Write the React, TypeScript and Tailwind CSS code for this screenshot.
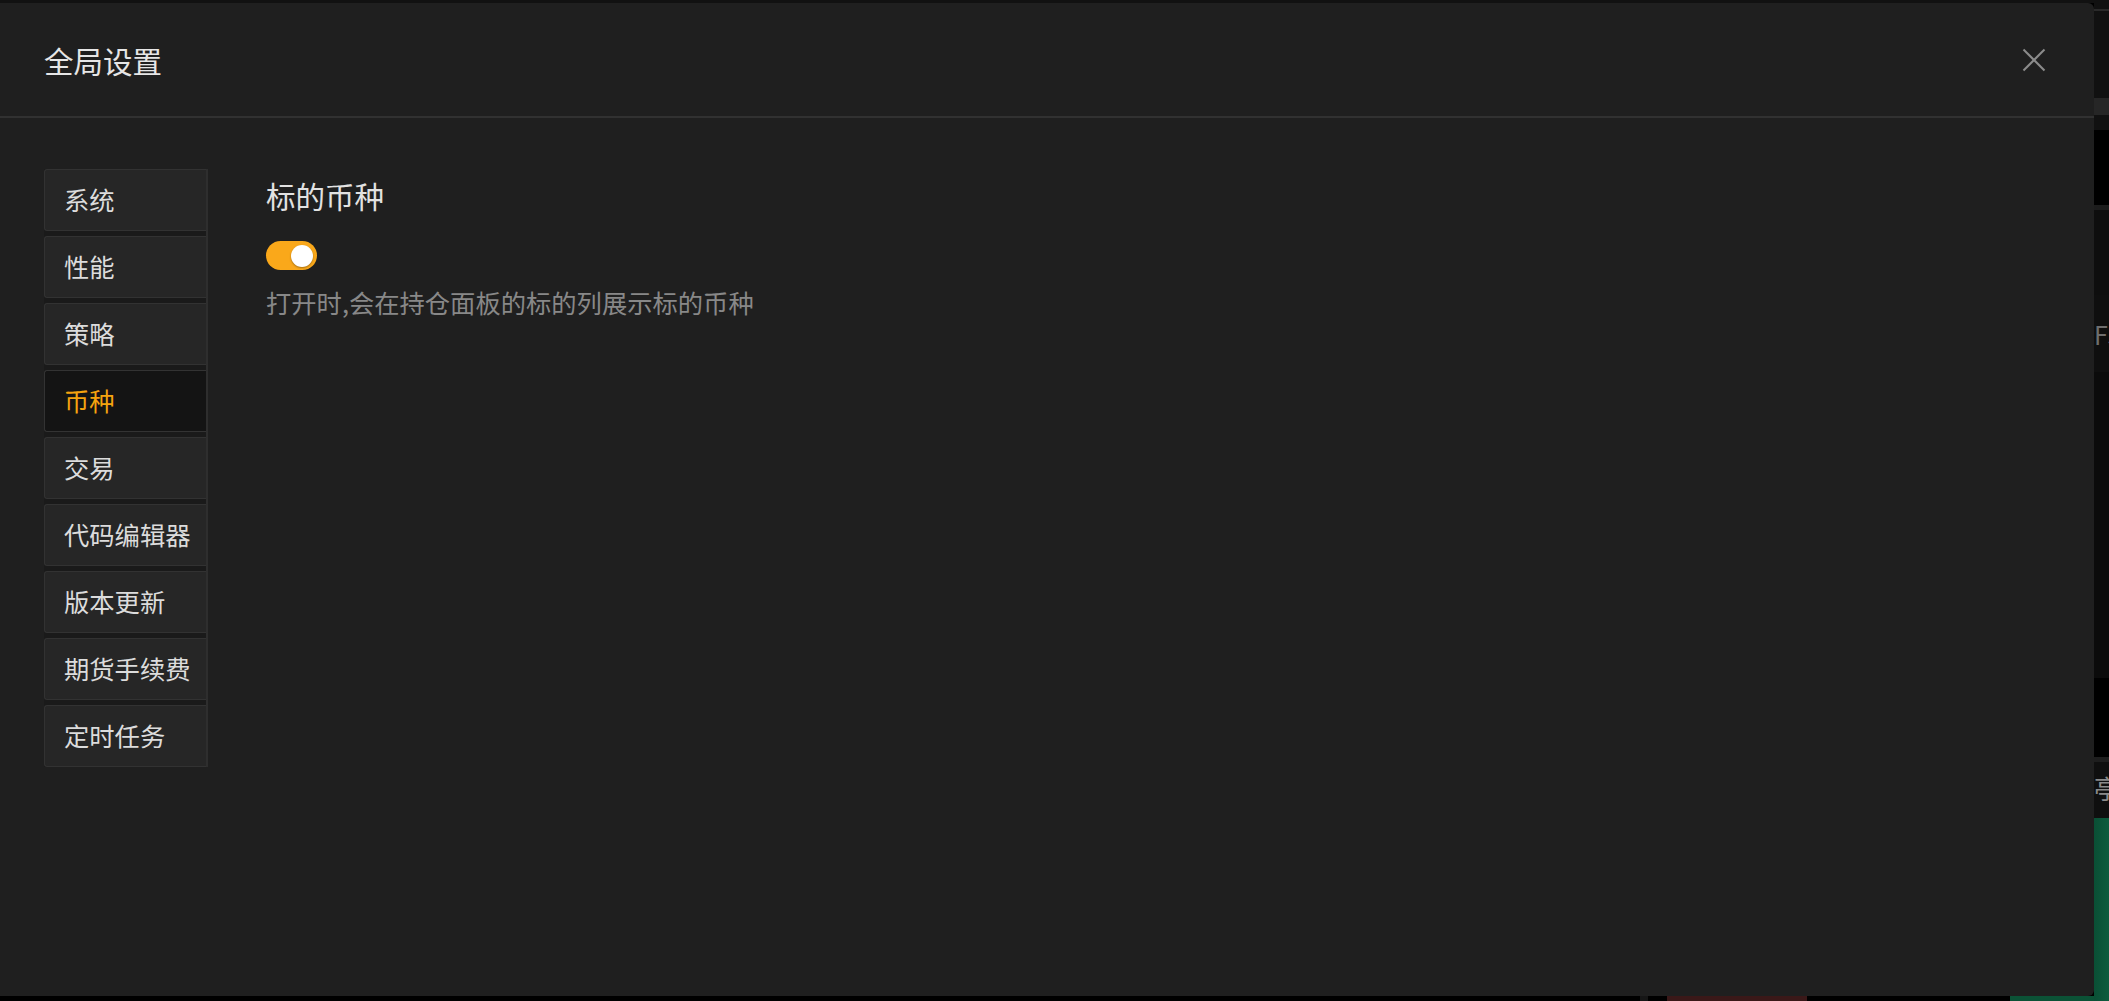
import React from "react";

const menu = ["系统", "性能", "策略", "币种", "交易", "代码编辑器", "版本更新", "期货手续费", "定时任务"];

export default function App() {
  return (
    <div className="relative w-[2109px] h-[1001px] overflow-hidden flex bg-black font-['Noto_Sans_CJK_SC','Noto_Sans',sans-serif]">
      {/* background app */}
      <div className="flex-1 flex flex-col">
        <div className="h-[3px] bg-[#111111]" />
        <div className="flex-1 bg-black" />
        <div className="h-[5px] flex">
          <div className="w-[1640px] bg-black" />
          <div className="w-[8px] bg-[#161616]" />
          <div className="w-[19px] bg-black" />
          <div className="w-[140px] bg-[#3a1818]" />
          <div className="w-[203px] bg-black" />
          <div className="w-[84px] bg-[#0b5236]" />
        </div>
      </div>
      <div className="w-[15px] flex flex-col overflow-hidden whitespace-nowrap">
        <div className="h-[9px] bg-[#111111]" />
        <div className="h-[2px] bg-[#2a2a2a]" />
        <div className="h-[87px] bg-[#111111]" />
        <div className="h-[17px] bg-[#262626]" />
        <div className="h-[15px] bg-[#111111]" />
        <div className="h-[75px] bg-black" />
        <div className="h-[5px] bg-[#1c1c1c]" />
        <div className="h-[85px] bg-[#0e0e0e]" />
        <div className="h-[77px] bg-[#0f0f0f] pt-[27px] text-[25px] leading-[25px] text-[#6e6e6e]">F5</div>
        <div className="h-[306px] bg-[#0b0b0b]" />
        <div className="h-[79px] bg-black" />
        <div className="h-[5px] bg-[#1e1e1e]" />
        <div className="h-[56px] bg-[#0f0f0f] pt-[12px] text-[26px] leading-[28px] text-[#8a8a8a]">亭</div>
        <div className="h-[183px] bg-gradient-to-r from-[#0a4f35] to-[#0d5c3e]" />
      </div>

      {/* modal */}
      <div className="absolute left-0 top-[3px] w-[2094px] h-[993px] bg-[#1f1f1f] rounded-r-[6px] flex flex-col">
        <div className="h-[115px] shrink-0 flex items-center justify-between pl-[44px] pr-[48px] border-b-2 border-[#313131]">
          <div className="text-[29.5px] leading-[40px] text-[#e6e6e6]">全局设置</div>
          <svg width="24" height="24" viewBox="0 0 24 24" className="text-[#8c8c8c]">
            <line x1="1.5" y1="1.5" x2="22.5" y2="22.5" stroke="currentColor" strokeWidth="2" />
            <line x1="22.5" y1="1.5" x2="1.5" y2="22.5" stroke="currentColor" strokeWidth="2" />
          </svg>
        </div>
        <div className="flex pl-[44px] pt-[51px]">
          <div className="w-[164px] flex flex-col gap-[5px] bg-[#1a1a1a] border-r-2 border-[#2e2e2e]">
            {menu.map((m) => {
              const active = m === "币种";
              return (
                <div
                  key={m}
                  className={
                    active
                      ? "h-[62px] flex items-center pl-[19px] text-[25.3px] text-[#f5a30f] bg-[#141414] border border-r-0 border-[#333333] rounded-l-[3px]"
                      : "h-[62px] flex items-center pl-[19px] text-[25.3px] text-[#dcdcdc] bg-[#262626] border border-r-0 border-[#323232] rounded-l-[3px]"
                  }
                >
                  {m}
                </div>
              );
            })}
          </div>
          <div className="pl-[58px] pt-[6px] flex flex-col items-start">
            <div className="text-[29.5px] leading-[40px] text-[#e2e2e2]">标的币种</div>
            <div className="mt-[26px] w-[51px] h-[29px] rounded-full bg-[#faa81a] flex items-center justify-end pr-[4px]">
              <div className="w-[22px] h-[22px] rounded-full bg-white shadow-[0_1px_2px_rgba(0,0,0,0.35)]" />
            </div>
            <div className="mt-[14px] text-[25.3px] leading-[36px] text-[#888888]">打开时,会在持仓面板的标的列展示标的币种</div>
          </div>
        </div>
      </div>
    </div>
  );
}
